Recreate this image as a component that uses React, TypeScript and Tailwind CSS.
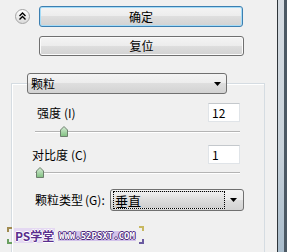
import React from "react";

const font = { fontFamily: "'Noto Sans CJK SC', 'DejaVu Sans', sans-serif" };

function Arrow() {
  return (
    <svg width="7" height="4" viewBox="0 0 7 4">
      <path d="M0 0 L7 0 L3.5 4 Z" fill="#000" />
    </svg>
  );
}

function Thumb() {
  return (
    <svg width="8" height="11" viewBox="0 0 8 11">
      <defs>
        <linearGradient id="tg" x1="0" y1="0" x2="0" y2="1">
          <stop offset="0" stopColor="#d8eed8" />
          <stop offset="1" stopColor="#7fbf7f" />
        </linearGradient>
      </defs>
      <path d="M4 0.5 L7.5 4 L7.5 10.5 L0.5 10.5 L0.5 4 Z" fill="url(#tg)" stroke="#6d7f6d" strokeWidth="1" />
    </svg>
  );
}

function Slider({ pos }: { pos: number }) {
  return (
    <div className="relative ml-[23px] w-[205px] h-[11px]">
      <div className="absolute left-0 right-0 top-[5px] h-[1px] bg-[#b4b4b4]" />
      <div className="absolute left-0 right-0 top-[6px] h-[1px] bg-[#ffffff]" />
      <div className="absolute top-0" style={{ left: pos }}>
        <Thumb />
      </div>
    </div>
  );
}

function Bracket({ cls, color }: { cls: string; color: string }) {
  return <div className={`absolute w-[5px] h-[5px] ${cls}`} style={{ borderColor: color }} />;
}

export default function App() {
  const grad =
    "rounded-[3px] text-[12px] text-black flex items-center bg-[linear-gradient(#f4f4f4_0%,#ececec_50%,#dedede_50%,#d2d2d2_100%)]";
  return (
    <div className="w-[287px] h-[252px] bg-[#f0f0f0] flex overflow-hidden relative" style={font}>
      <div className="w-[277px] flex flex-col">
        <div className="mt-[6px] flex items-center">
          <div className="ml-[15px] w-[15px] h-[15px] rounded-full border border-[#a4a4a4] bg-[linear-gradient(#ffffff,#dadada)] flex items-center justify-center">
            <svg width="9" height="9" viewBox="0 0 9 9">
              <path d="M1.5 4 L4.5 1 L7.5 4 M1.5 7.5 L4.5 4.5 L7.5 7.5" stroke="#000" strokeWidth="1.4" fill="none" />
            </svg>
          </div>
          <div className={`ml-[9px] w-[204px] h-[21px] border border-[#3c7fb1] shadow-[inset_0_0_0_1px_#a6dcf7] justify-center ${grad}`}>
            确定
          </div>
        </div>
        <div className={`mt-[9px] ml-[39px] w-[205px] h-[20px] border border-[#707070] shadow-[inset_0_0_0_1px_#fbfbfb] justify-center ${grad}`}>
          复位
        </div>
        <div className="mt-[27px] ml-[11px] w-[254px] flex-1 border-l border-t border-r border-[#d5dce2] shadow-[inset_1px_1px_0_#ffffff] flex flex-col">
          <div className={`-mt-[11px] ml-[15px] w-[200px] h-[21px] border border-[#707070] justify-between px-[3px] ${grad}`}>
            <span className="text-[12px]">颗粒</span>
            <span className="mr-[2px] flex">
              <Arrow />
            </span>
          </div>
          <div className="mt-[9px] h-[19px] flex items-center">
            <span className="ml-[25px] text-[12px]">
              强度<span className="ml-[3px] text-[12px]">(I)</span>
            </span>
            <div className="ml-auto mr-[24px] w-[32px] h-[19px] bg-white border border-[#e0e4e8] border-t-[#c4c8cc] text-[12px] pl-[3px] leading-[17px]">
              12
            </div>
          </div>
          <div className="mt-[4px]">
            <Slider pos={25} />
          </div>
          <div className="mt-[8px] h-[19px] flex items-center">
            <span className="ml-[20px] text-[12px]">
              对比度<span className="ml-[3px] text-[12px]">(C)</span>
            </span>
            <div className="ml-auto mr-[24px] w-[32px] h-[19px] bg-white border border-[#e0e4e8] border-t-[#c4c8cc] text-[12px] pl-[3px] leading-[17px]">
              1
            </div>
          </div>
          <div className="mt-[3px]">
            <Slider pos={1} />
          </div>
          <div className="mt-[11px] h-[22px] flex items-center">
            <span className="ml-[23px] text-[12px]">
              颗粒类型<span className="ml-[2px] text-[12px]">(G):</span>
            </span>
            <div className={`ml-auto mr-[20px] w-[134px] h-[22px] border border-[#707070] justify-between px-[2px] ${grad}`}>
              <div className="w-[112px] h-[18px] border border-dotted border-black flex items-center bg-[linear-gradient(#f0f0f0,#dcdcdc_50%,#cfcfcf)]">
                <span className="ml-[1px] text-[13px] leading-none">垂直</span>
              </div>
              <span className="mr-[4px] flex">
                <Arrow />
              </span>
            </div>
          </div>
        </div>
      </div>
      <div className="w-[1px] bg-[#2f353a]" />
      <div className="w-[6px] bg-[linear-gradient(#d6dce2,#c8d2da_60%,#a9bccb)]" />
      <div className="w-[3px] bg-[#4c5964]" />

      {/* watermark overlay */}
      <Bracket cls="left-[7px] top-[227px] border-l-2 border-t-2" color="#a08a50" />
      <Bracket cls="left-[7px] top-[239px] border-l-2 border-b-2" color="#6aa060" />
      <Bracket cls="left-[139px] top-[226px] border-r-2 border-t-2" color="#c8b860" />
      <Bracket cls="left-[139px] top-[239px] border-r-2 border-b-2" color="#6a5aa0" />
      <div
        className="absolute left-[14px] top-[228px] h-[15px] px-[1px] bg-[#e4d8f2] text-[12px] font-bold leading-[15px] text-[#5a2e8e]"
        style={{ textShadow: "1px 0 #fff, -1px 0 #fff, 0 1px #fff, 0 -1px #fff" }}
      >
        PS学堂
      </div>
      <div
        className="absolute left-[58px] top-[231px] h-[10px] px-[1px] bg-[#d2c2ea] text-[9px] font-bold leading-[10px] text-white"
        style={{
          fontFamily: "'DejaVu Sans Mono', monospace",
          textShadow: "1px 0 #4b2a7a, -1px 0 #4b2a7a, 0 1px #4b2a7a, 0 -1px #4b2a7a",
        }}
      >
        WWW.52PSXT.COM
      </div>
    </div>
  );
}
